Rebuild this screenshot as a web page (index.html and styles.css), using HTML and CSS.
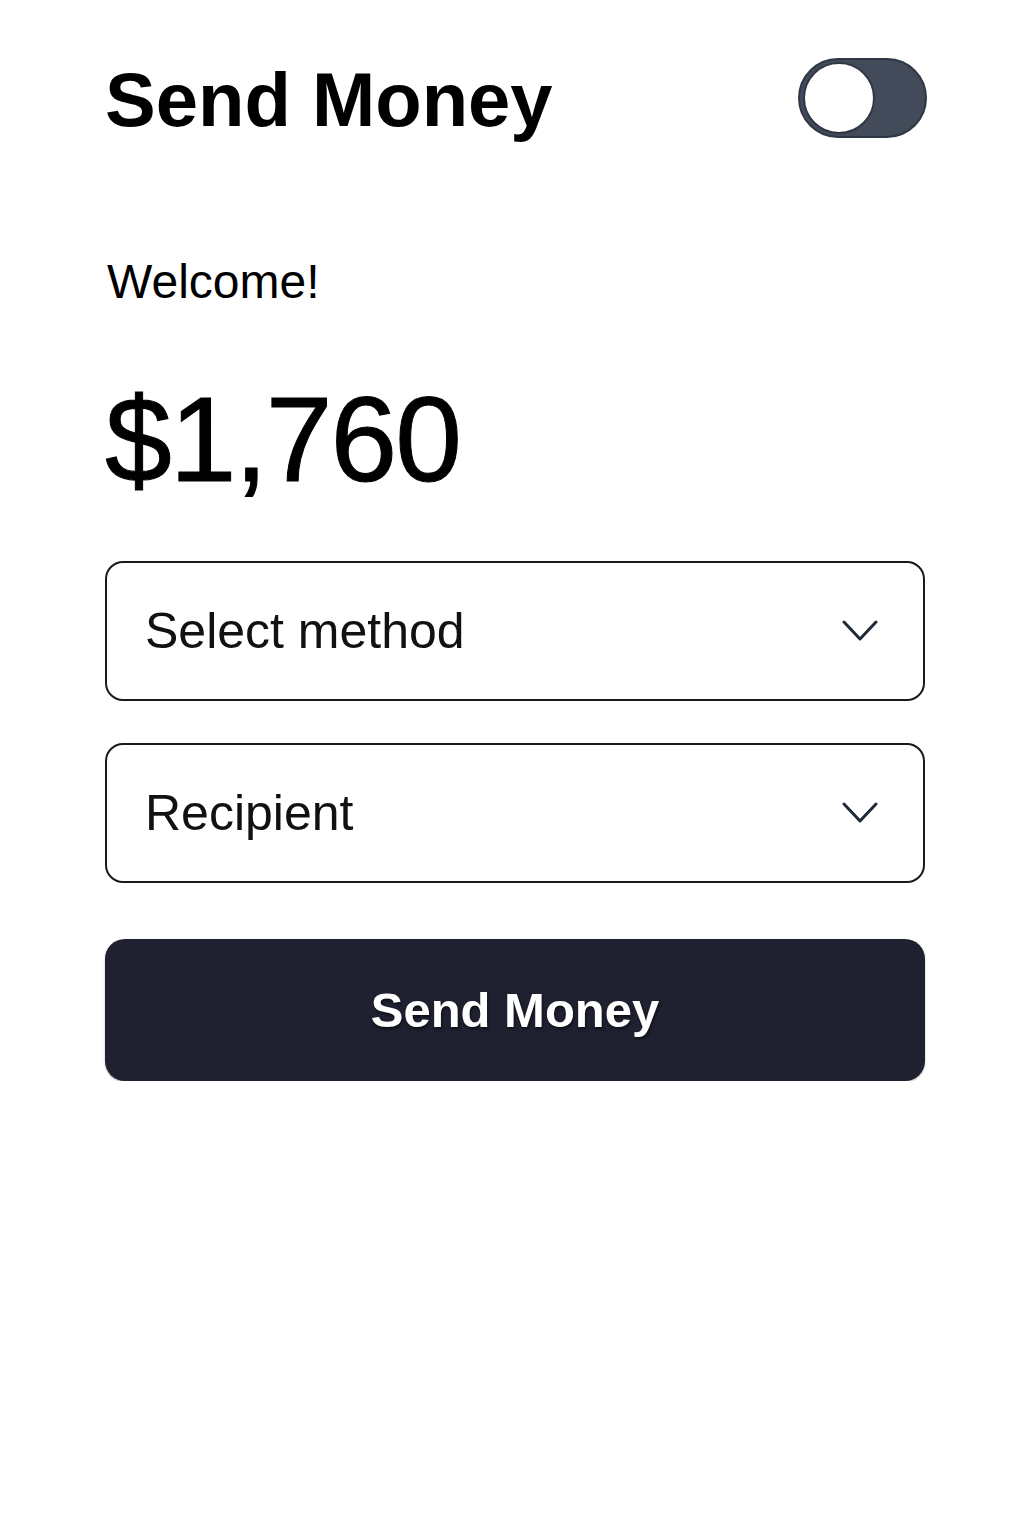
FILE: index.html
```html
<!DOCTYPE html>
<html lang="en">
<head>
<meta charset="utf-8">
<title>Send Money</title>
<link rel="stylesheet" href="styles.css">
</head>
<body>
<main class="page">
  <header class="header">
    <h1 class="title">Send Money</h1>
    <div class="toggle" role="switch" aria-checked="false"><span class="knob"></span></div>
  </header>
  <p class="welcome">Welcome!</p>
  <p class="amount">$1,760</p>
  <div class="select">
    <span class="select-label">Select method</span>
    <svg class="chevron" viewBox="0 0 36 22" width="36" height="22"><path d="M2 2 L18 19 L34 2" fill="none" stroke="#1f2937" stroke-width="3" stroke-linecap="round" stroke-linejoin="round"/></svg>
  </div>
  <div class="select">
    <span class="select-label">Recipient</span>
    <svg class="chevron" viewBox="0 0 36 22" width="36" height="22"><path d="M2 2 L18 19 L34 2" fill="none" stroke="#1f2937" stroke-width="3" stroke-linecap="round" stroke-linejoin="round"/></svg>
  </div>
  <button class="send-btn" type="button">Send Money</button>
</main>
</body>
</html>
```
FILE: styles.css
```css
* { box-sizing: border-box; }
html, body { margin: 0; padding: 0; background: #ffffff; }
body {
  font-family: "Liberation Sans", Arial, sans-serif;
  color: #000;
}
.page {
  width: 1024px;
  padding: 58px 99px 0 105px;
  display: flex;
  flex-direction: column;
}
.header {
  display: flex;
  justify-content: space-between;
  align-items: center;
  height: 80px;
}
.title {
  margin: 0;
  font-size: 76px;
  font-weight: 700;
  line-height: 1;
  position: relative;
  top: 2px;
}
.toggle {
  width: 129px;
  height: 80px;
  border-radius: 40px;
  background: #434b5a;
  border: 2px solid #2f3644;
  position: relative;
  margin-right: -2px;
}
.knob {
  position: absolute;
  left: 3px;
  top: 2px;
  width: 72px;
  height: 72px;
  border-radius: 50%;
  background: #fff;
  border: 2px solid #2f3644;
}
.welcome {
  margin: 120px 0 0 2px;
  font-size: 48px;
  line-height: 1;
}
.amount {
  margin: 73px 0 0 0;
  font-size: 120px;
  line-height: 1;
  letter-spacing: -2px;
  -webkit-text-stroke: 1px #000;
}
.select {
  margin-top: 62px;
  height: 140px;
  border: 2px solid #1a1a1a;
  border-radius: 18px;
  display: flex;
  align-items: center;
  justify-content: space-between;
  padding: 0 45px 0 38px;
}
.select + .select { margin-top: 42px; }
.select-label {
  font-size: 50px;
  color: #111;
}
.chevron { display: block; }
.send-btn {
  margin-top: 56px;
  height: 142px;
  border: none;
  border-radius: 20px;
  background: #1f2131;
  color: #fff;
  font-family: "Liberation Sans", Arial, sans-serif;
  font-size: 49px;
  font-weight: 700;
  text-shadow: 1px 2px 3px rgba(0,0,0,0.6);
  box-shadow: 0 1px 2px rgba(0,0,0,0.3);
  cursor: pointer;
}
```
